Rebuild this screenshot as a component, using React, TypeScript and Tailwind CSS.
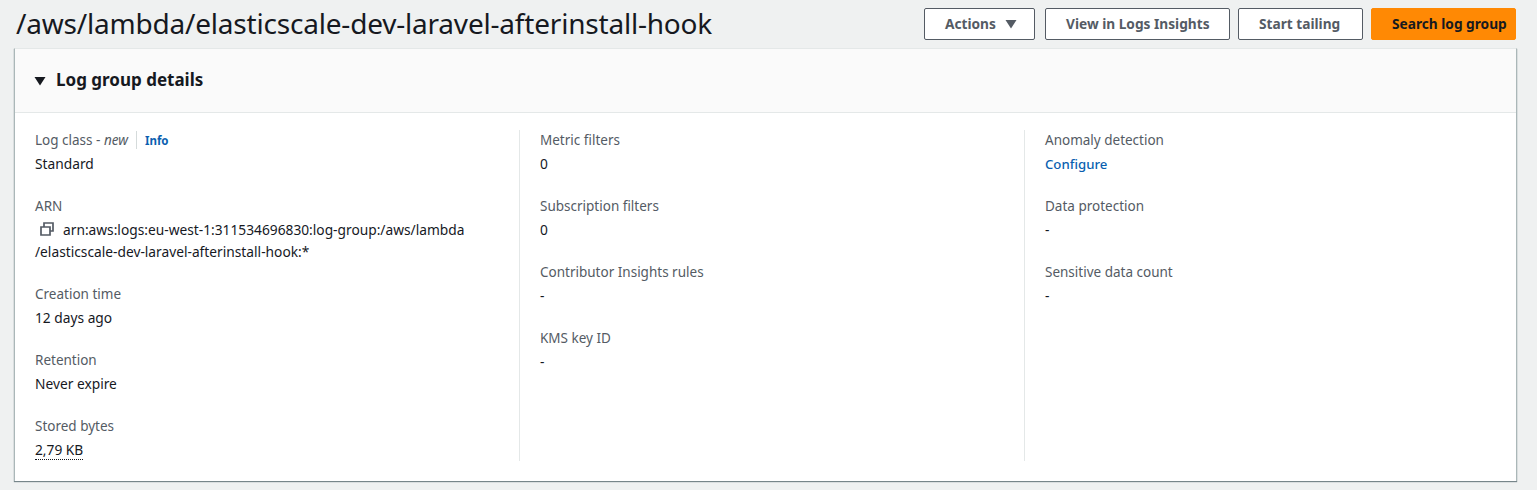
import React from "react";

function Item({ label, children }: { label: React.ReactNode; children: React.ReactNode }) {
  return (
    <div className="mb-5">
      <div className="text-[13.5px] leading-[22px] text-[#545b64] mb-[2px]">{label}</div>
      <div className="text-[13.75px] leading-[22px] text-[#16191f]">{children}</div>
    </div>
  );
}

const btn =
  "h-8 flex items-center rounded-[2px] border pl-5 text-[13.7px] font-bold whitespace-nowrap";
const normal = "border-[#545b64] bg-white text-[#545b64]";

export default function App() {
  return (
    <div className="h-[490px] w-[1537px] overflow-hidden bg-[#eff1f1] font-['Noto_Sans','Open_Sans',sans-serif] pt-2">
      <div className="flex items-center justify-between pl-4 pr-[21px] h-8">
        <h1 className="text-[28px] leading-8 font-normal text-[#16191f] tracking-[-0.2px] pb-[2px]">
          /aws/lambda/elasticscale-dev-laravel-afterinstall-hook
        </h1>
        <div className="flex">
          <button className={`${btn} ${normal} w-[111px] mr-[10px]`}>
            Actions
            <svg width="12" height="10" viewBox="0 0 12 10" className="ml-[9px]"><path d="M0.5 1h11L6 9.5z" fill="#545b64" /></svg>
          </button>
          <button className={`${btn} ${normal} w-[185px] mr-2`}>View in Logs Insights</button>
          <button className={`${btn} ${normal} w-[125px] mr-2`}>Start tailing</button>
          <button className={`${btn} w-[145px] border-[#ff8904] bg-[#ff8904] text-[#16191f]`}>Search log group</button>
        </div>
      </div>

      <div className="ml-[14px] mt-2 w-[1503px] h-[433px] bg-white border-t border-t-[#e4e8e8] border-l border-l-[#aab7b8] border-r border-r-[#aab7b8] shadow-[0_1px_1px_0_rgba(0,28,36,0.5)]">
        <div className="h-[64px] bg-[#fafafa] border-b border-[#e4e8e8] flex items-center pl-[19px]">
          <svg width="12" height="10" viewBox="0 0 12 10" className="mr-[10px]">
            <path d="M0.5 1h11L6 9.5z" fill="#16191f" />
          </svg>
          <h2 className="text-[17px] leading-[22px] font-bold text-[#16191f] pb-[2px]">Log group details</h2>
        </div>

        <div className="grid grid-cols-[484px_505px_1fr] pt-[17px] pl-[20px]">
          <div className="h-[331px] -mt-px">
            <Item
              label={
                <div className="flex items-center">
                  <span>
                    Log class - <em>new</em>
                  </span>
                  <span className="ml-2 pl-2 border-l border-[#d5dbdb] h-[18px] flex items-center text-[11.5px] font-bold text-[#0a5fb0] pt-[2px]">
                    Info
                  </span>
                </div>
              }
            >
              Standard
            </Item>
            <Item label="ARN">
              <svg width="16" height="16" viewBox="0 0 16 16" fill="none" stroke="#545b64" strokeWidth="1.7" className="inline-block ml-[4px] mr-[8px] align-[-2px]">
                <path d="M2 6h9v8H2z" />
                <path d="M5 6V2h9v8h-3" />
              </svg>
              arn:aws:logs:eu-west-1:311534696830:log-group:/aws/lambda
              <br />
              /elasticscale-dev-laravel-afterinstall-hook:*
            </Item>
            <Item label="Creation time">12 days ago</Item>
            <Item label="Retention">Never expire</Item>
            <Item label="Stored bytes">
              <span className="border-b border-dotted border-[#16191f]">2,79 KB</span>
            </Item>
          </div>
          <div className="h-[331px] border-l border-[#e4e8e8] pl-5">
            <div className="-mt-px">
              <Item label="Metric filters">0</Item>
              <Item label="Subscription filters">0</Item>
              <Item label="Contributor Insights rules">-</Item>
              <Item label="KMS key ID">-</Item>
            </div>
          </div>
          <div className="h-[331px] border-l border-[#e4e8e8] pl-5">
            <div className="-mt-px">
              <Item label="Anomaly detection">
                <span className="text-[#0a5fb0] font-medium text-[13.2px]">Configure</span>
              </Item>
              <Item label="Data protection">-</Item>
              <Item label="Sensitive data count">-</Item>
            </div>
          </div>
        </div>
      </div>
    </div>
  );
}
